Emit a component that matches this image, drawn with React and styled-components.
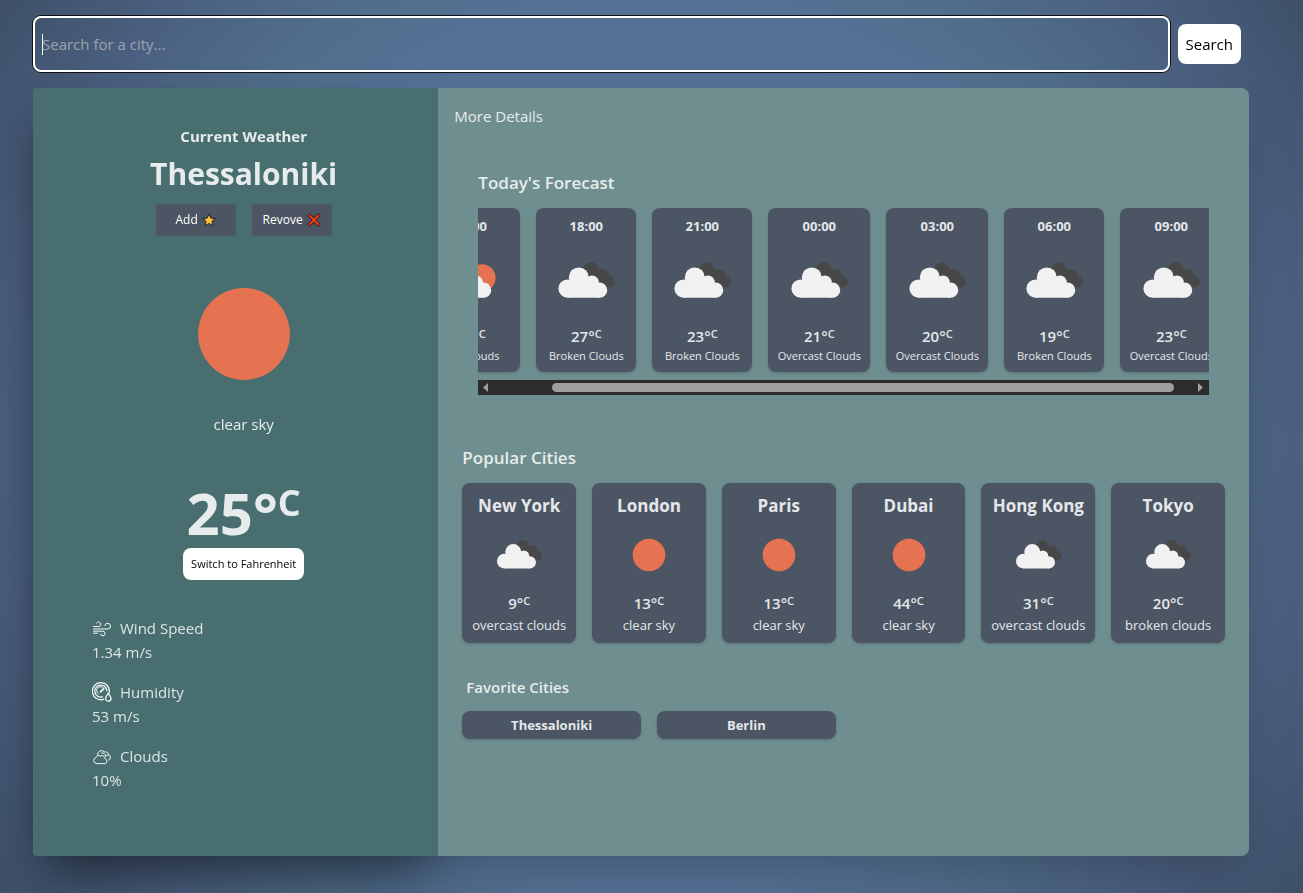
import React, { useEffect, useRef } from "react";
import styled, { createGlobalStyle } from "styled-components";

const GlobalStyle = createGlobalStyle`
  *, *::before, *::after { box-sizing: border-box; }
  body {
    margin: 0;
    font-family: "Segoe UI", "Open Sans", "Noto Sans", sans-serif;
    font-size: 15px;
    line-height: 24px;
    color: #fff;
  }
  h1, h2, h3, p, dl, dd, ul { margin: 0; padding: 0; }
  button, input { font: inherit; }
`;

const Page = styled.div`
  min-height: 100vh;
  padding: 16px 54px 37px 33px;
  background: radial-gradient(circle at center, #567296 0%, #557296 56%, #506d8a 68%, #4b6080 82%, #3e5068 100%);
`;

const SearchBar = styled.form`
  display: flex;
  align-items: center;
  gap: 8px;
  margin-bottom: 16px;
  padding-right: 8px;
`;

const SearchInput = styled.input`
  flex: 1;
  min-width: 0;
  height: 56px;
  padding: 8px 9px;
  border: 0;
  border-radius: 8px;
  background: linear-gradient(#fff, #fff) 9px center / 1px 21px no-repeat;
  caret-color: transparent;
  color: #fff;
  box-shadow: 0 0 0 1px #101010, inset 0 0 0 2px #fff;
  outline: none;
  &::placeholder { color: #9ca3af; opacity: 1; }
`;

const LightButton = styled.button`
  height: ${(p) => (p.$small ? 32 : 40)}px;
  padding: 0 8px;
  border: 0;
  border-radius: 8px;
  background: #fff;
  color: #000;
  font-size: ${(p) => (p.$small ? 11 : 15)}px;
  white-space: nowrap;
`;

const Board = styled.main`
  display: grid;
  grid-template-columns: 1fr 2fr;
  min-height: 768px;
  border-radius: 8px;
  box-shadow: 0 25px 50px -12px rgba(0, 0, 0, 0.25);
`;

const Current = styled.section`
  display: flex;
  flex-direction: column;
  align-items: center;
  padding: 36px 0 0 16px;
  border-radius: 4px 0 0 4px;
  background: #496e6f;
  box-shadow: 0 25px 50px -12px rgba(0, 0, 0, 0.45);
  color: #e6ecec;
`;

const Eyebrow = styled.h2`
  font-size: 15px;
  font-weight: 700;
`;

const CityName = styled.h1`
  margin: 6px 0 10px;
  font-size: 30px;
  line-height: 40px;
`;

const Actions = styled.div`
  display: flex;
  gap: 16px;
  margin-bottom: 8px;
`;

const ActionButton = styled.button`
  display: flex;
  align-items: center;
  justify-content: center;
  gap: 4px;
  width: 80px;
  height: 32px;
  padding: 0;
  border: 0;
  border-radius: 4px;
  background: #4b5563;
  color: #fff;
  font-size: 12px;
  font-weight: 500;
`;

const Summary = styled.p`
  margin: -12px 0 47px;
`;

const BigTemp = styled.p`
  font-size: 58px;
  font-weight: 700;
  line-height: 60px;
  margin-bottom: 5px;
  sup { font-size: 36px; line-height: 0; vertical-align: 19px; }
`;

const Stats = styled.dl`
  align-self: stretch;
  display: flex;
  flex-direction: column;
  gap: 16px;
  margin: 36px 0 0 43px;
  color: #dbe5e5;
  dt { display: flex; align-items: center; gap: 8px; }
`;

const Details = styled.section`
  position: relative;
  min-width: 0;
  display: flex;
  flex-direction: column;
  padding: 16px 24px;
  border-radius: 0 8px 8px 0;
  background: #6f8e8f;
  color: #e6ecec;
`;

const Lead = styled.p`
  margin-left: -8px;
`;

const SectionTitle = styled.h3`
  margin: ${(p) => p.$margin};
  font-size: ${(p) => (p.$small ? 15 : 17)}px;
  line-height: 28px;
  font-weight: 600;
`;

const Strip = styled.ul`
  display: flex;
  gap: 16px;
  margin: 0 16px;
  padding-bottom: 8px;
  overflow: hidden;
  list-style: none;
`;

const HourCard = styled.li`
  flex: 0 0 auto;
  display: flex;
  flex-direction: column;
  align-items: center;
  width: ${(p) => (p.$wide ? 102 : 100)}px;
  height: 164px;
  padding: 8px 0;
  border-radius: 8px;
  background: #4b5563;
  box-shadow: 0 1px 3px rgba(0, 0, 0, 0.2);
  color: #e5e7eb;
  font-size: 11px;
  line-height: 20px;
  white-space: nowrap;
  svg { margin: 5px 0; }
`;

const Hour = styled.p`
  font-size: 13px;
  font-weight: 700;
`;

const Degrees = styled.p`
  font-size: 15px;
  font-weight: 600;
  line-height: 20px;
  sup { font-size: 11px; line-height: 0; vertical-align: 4px; }
`;

const ScrollTrack = styled.div`
  display: flex;
  align-items: center;
  height: 15px;
  margin: 0 16px;
  padding: 0 5px 0 4px;
  background: #2c2c2c;
`;

const ScrollLane = styled.div`
  flex: 1;
  padding: 0 23px 0 63px;
`;

const ScrollThumb = styled.div`
  height: 9px;
  border-radius: 5px;
  background: #9f9f9f;
`;

const CityGrid = styled.div`
  display: grid;
  grid-template-columns: repeat(6, minmax(0, 1fr));
  gap: 16px;
`;

const CityCard = styled.article`
  display: flex;
  flex-direction: column;
  align-items: center;
  height: 160px;
  padding: 9px 0 6px;
  border-radius: 8px;
  background: #4b5563;
  box-shadow: 0 1px 3px rgba(0, 0, 0, 0.2);
  color: #e5e7eb;
  font-size: 13px;
  white-space: nowrap;
  h4 { margin: 0; font-size: 17px; line-height: 28px; }
  svg { margin: 3px 0 6px; }
`;

const Favorites = styled.div`
  display: grid;
  grid-template-columns: repeat(4, minmax(0, 1fr));
  gap: 16px;
`;

const FavoriteButton = styled.button`
  height: 28px;
  border: 0;
  border-radius: 8px;
  background: #4b5563;
  box-shadow: 0 1px 3px rgba(0, 0, 0, 0.2);
  color: #e5e7eb;
  font-size: 13px;
  font-weight: 700;
`;

const Picture = styled.svg`
  display: block;
  flex: none;
`;

function WeatherIcon({ kind, size }) {
  return (
    <Picture width={size} height={size} viewBox="0 0 100 100" aria-hidden="true">
      {kind === "sun" && <circle cx="50" cy="50" r="25.5" fill="#e57251" />}
      {kind === "partly" && <circle cx="65" cy="46" r="17" fill="#e57251" />}
      {kind === "clouds" && (
        <g fill="#474747">
          <circle cx="56" cy="36.500" r="9.800" />
          <circle cx="70.500" cy="43.500" r="8.500" />
          <circle cx="79" cy="51" r="7.200" />
          <path d="M50 42l16-6 12 21-10 2z" />
        </g>
      )}
      {kind !== "sun" && (
        <g fill="#f1f1f1">
          <circle cx="27" cy="59.500" r="11.500" />
          <circle cx="41" cy="45.500" r="12.500" />
          <circle cx="57.500" cy="51.500" r="8.500" />
          <circle cx="67" cy="61.500" r="9.500" />
          <path d="M27 50l14-6 17 6 9 10v11H27z" />
        </g>
      )}
    </Picture>
  );
}

function StarIcon() {
  return (
    <Picture width="14" height="14" viewBox="0 0 14 14" aria-hidden="true">
      <path d="M7 1l1.800 4.100 4.500.4-3.400 2.900 1.100 4.500L7 10.500l-4 2.400 1.100-4.500L.7 5.500l4.500-.4z" fill="#fcc43c" stroke="#26221c" strokeLinejoin="round" />
    </Picture>
  );
}

function CrossIcon() {
  return (
    <Picture width="14" height="14" viewBox="0 0 14 14" aria-hidden="true">
      <path d="M1.500 1.500l11 11M12.500 1.500l-11 11" stroke="#26221c" strokeWidth="3.800" />
      <path d="M2 2l10 10M12 2L2 12" stroke="#f03a17" strokeWidth="2.200" />
    </Picture>
  );
}

function StatIcon({ children }) {
  return (
    <Picture width="20" height="20" viewBox="0 0 20 20" fill="none" stroke="#f2f6f6" strokeLinecap="round" aria-hidden="true">
      {children}
    </Picture>
  );
}

function Temperature({ as: Tag, value }) {
  return (
    <Tag>
      {value}°<sup>C</sup>
    </Tag>
  );
}

const hours = [
  ["15:00", "partly", 28, "Few Clouds"],
  ["18:00", "clouds", 27, "Broken Clouds"],
  ["21:00", "clouds", 23, "Broken Clouds"],
  ["00:00", "clouds", 21, "Overcast Clouds"],
  ["03:00", "clouds", 20, "Overcast Clouds"],
  ["06:00", "clouds", 19, "Broken Clouds"],
  ["09:00", "clouds", 23, "Overcast Clouds"],
];

const cities = [
  ["New York", "clouds", 9, "overcast clouds"],
  ["London", "sun", 13, "clear sky"],
  ["Paris", "sun", 13, "clear sky"],
  ["Dubai", "sun", 44, "clear sky"],
  ["Hong Kong", "clouds", 31, "overcast clouds"],
  ["Tokyo", "clouds", 20, "broken clouds"],
];

export default function App() {
  const strip = useRef(null);
  useEffect(() => {
    strip.current.scrollLeft = 58;
  }, []);

  return (
    <Page>
      <GlobalStyle />
      <SearchBar onSubmit={(e) => e.preventDefault()}>
        <SearchInput aria-label="City" placeholder="Search for a city..." autoFocus />
        <LightButton type="submit">Search</LightButton>
      </SearchBar>
      <Board>
        <Current>
          <Eyebrow>Current Weather</Eyebrow>
          <CityName>Thessaloniki</CityName>
          <Actions>
            <ActionButton type="button">Add <StarIcon /></ActionButton>
            <ActionButton type="button">Revove <CrossIcon /></ActionButton>
          </Actions>
          <WeatherIcon kind="sun" size={180} />
          <Summary>clear sky</Summary>
          <Temperature as={BigTemp} value={25} />
          <LightButton type="button" $small>Switch to Fahrenheit</LightButton>
          <Stats>
            <div>
              <dt>
                <StatIcon>
                  <path d="M4.500 5.200a2.300 2.300 0 1 1 2.300 3.300H1.500M1.500 11H16a2.900 2.900 0 1 0-3.200-3.500M1.500 13.200H11a2.300 2.300 0 1 1-2.500 2.800M1.500 15.200h4" />
                </StatIcon>
                Wind Speed
              </dt>
              <dd>1.34 m/s</dd>
            </div>
            <div>
              <dt>
                <StatIcon>
                  <path strokeWidth="1.300" d="M11.500 17.300a8.500 8.500 0 1 1 5.800-7M10.500 14.800a6 6 0 1 1 4.300-6" />
                  <path d="M6.500 12a4 4 0 1 1 5.500-5.500" />
                  <path strokeWidth="1.800" d="M8.500 9.800l3-3" />
                  <path strokeWidth="1.300" d="M16.300 11.200c2 3 2.700 4.300 2.700 5.300a2.700 2.700 0 0 1-5.400 0c0-1 .7-2.300 2.700-5.300z" />
                </StatIcon>
                Humidity
              </dt>
              <dd>53 m/s</dd>
            </div>
            <div>
              <dt>
                <StatIcon>
                  <path d="M4 17.500a3 3 0 0 1-.2-5.800 3 3 0 0 1 4.500-1.700 3.500 3.500 0 0 1 5 3 2.400 2.400 0 0 1 .2 4.500zM5.500 9a4 4 0 0 1 7-3 3 3 0 0 1 4 2.500 3 3 0 0 1 .2 5.500M9.500 7a3 3 0 0 1 4 3M13.500 10a3 3 0 0 1 3-1" />
                </StatIcon>
                Clouds
              </dt>
              <dd>10%</dd>
            </div>
          </Stats>
        </Current>
        <Details>
          <Lead>More Details</Lead>
          <SectionTitle $margin="41px 16px 11px">Today's Forecast</SectionTitle>
          <Strip ref={strip}>
            {hours.map(([time, kind, value, text]) => (
              <HourCard key={time} $wide={text.startsWith("Overcast")}>
                <Hour>{time}</Hour>
                <WeatherIcon kind={kind} size={80} />
                <Temperature as={Degrees} value={value} />
                <p>{text}</p>
              </HourCard>
            ))}
          </Strip>
          <ScrollTrack aria-hidden="true">
            <svg width="7" height="9" viewBox="0 0 7 9"><path d="M6 0v9L1 4.500z" fill="#9f9f9f" /></svg>
            <ScrollLane><ScrollThumb /></ScrollLane>
            <svg width="7" height="9" viewBox="0 0 7 9"><path d="M1 0v9l5-4.500z" fill="#9f9f9f" /></svg>
          </ScrollTrack>
          <SectionTitle $margin="49px 0 11px">Popular Cities</SectionTitle>
          <CityGrid>
            {cities.map(([name, kind, value, text]) => (
              <CityCard key={name}>
                <h4>{name}</h4>
                <WeatherIcon kind={kind} size={64} />
                <Temperature as={Degrees} value={value} />
                <p>{text}</p>
              </CityCard>
            ))}
          </CityGrid>
          <SectionTitle $small $margin="30px 4px 10px">Favorite Cities</SectionTitle>
          <Favorites>
            <FavoriteButton type="button">Thessaloniki</FavoriteButton>
            <FavoriteButton type="button">Berlin</FavoriteButton>
          </Favorites>
        </Details>
      </Board>
    </Page>
  );
}
